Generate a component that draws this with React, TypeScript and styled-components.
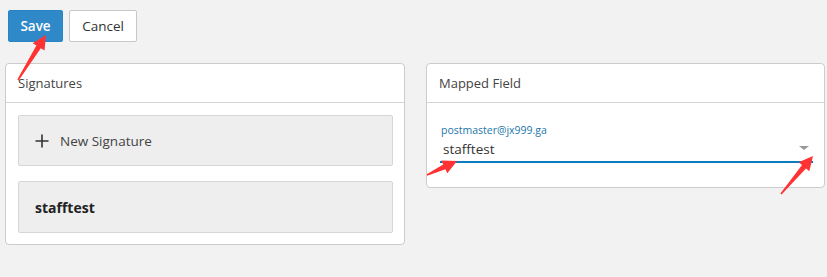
import React from "react";
import styled, { createGlobalStyle } from "styled-components";

const Global = createGlobalStyle`
  html, body { margin: 0; padding: 0; background: #f2f2f2; }
  body { font-family: "Open Sans", "Noto Sans", Arial, sans-serif; color: #333; }
`;

const Page = styled.div`
  position: relative;
  width: 827px;
  height: 277px;
  box-sizing: border-box;
  padding: 10px 3px 0 5px;
`;

const Toolbar = styled.div`
  display: flex;
  gap: 6px;
  padding-left: 3px;
  height: 32px;
`;

const Button = styled.button<{ $primary?: boolean }>`
  box-sizing: border-box;
  height: 32px;
  width: ${(p) => (p.$primary ? 55 : 68)}px;
  padding: 0;
  border-radius: 2px;
  font-family: inherit;
  font-size: 13.5px;
  font-weight: ${(p) => (p.$primary ? 600 : 400)};
  border: 1px solid ${(p) => (p.$primary ? "#2a84c4" : "#c8c8c8")};
  background: ${(p) => (p.$primary ? "#2f88c8" : "#ffffff")};
  color: ${(p) => (p.$primary ? "#ffffff" : "#333")};
`;

const Columns = styled.div`
  display: grid;
  grid-template-columns: 400px 399px;
  column-gap: 21px;
  align-items: start;
  margin-top: 21px;
`;

const Card = styled.section`
  background: #fff;
  border: 1px solid #cccccc;
  border-radius: 4px;
`;

const CardHeader = styled.div`
  height: 38px;
  display: flex;
  align-items: center;
  padding-left: 12px;
  border-bottom: 1px solid #d4d4d4;
  font-size: 13px;
  color: #444;
`;

const List = styled.div`
  display: flex;
  flex-direction: column;
  gap: 15px;
  padding: 12px 11px 11px 12px;
`;

const Tile = styled.div<{ $h: number }>`
  box-sizing: border-box;
  height: ${(p) => p.$h}px;
  display: flex;
  align-items: center;
  gap: 11px;
  padding-left: 16px;
  background: #eeeeee;
  border: 1px solid #d6d6d6;
  border-radius: 2px;
  font-size: 13.5px;
  color: #444;
`;

const Strong = styled.span`
  font-weight: 700;
  color: #222;
  font-size: 14px;
`;

const FieldBody = styled.div`
  padding: 20px 11px 24px 13px;
`;

const FieldLabel = styled.div`
  font-size: 10.5px;
  color: #1c76ab;
  line-height: 14px;
  padding-left: 1px;
`;

const Select = styled.div`
  display: flex;
  align-items: center;
  justify-content: space-between;
  height: 24px;
  border-bottom: 2px solid #0a7cc2;
  padding: 0 4px 0 3px;
  font-size: 13.5px;
  color: #333;
`;

const Caret = styled.span`
  width: 0;
  height: 0;
  border-left: 5px solid transparent;
  border-right: 5px solid transparent;
  border-top: 4px solid #9a9a9a;
  margin-top: -2px;
`;

const Overlay = styled.svg`
  position: absolute;
  left: 0;
  top: 0;
  pointer-events: none;
`;

function Arrow({ x1, y1, x2, y2 }: { x1: number; y1: number; x2: number; y2: number }) {
  const dx = x2 - x1;
  const dy = y2 - y1;
  const len = Math.hypot(dx, dy);
  const ux = dx / len;
  const uy = dy / len;
  const px = -uy;
  const py = ux;
  const head = 14;
  const hw = 7;
  const sw = 2.6;
  const bx = x2 - ux * head;
  const by = y2 - uy * head;
  const pts = [
    [x1 + px * 0.8, y1 + py * 0.8],
    [bx + px * sw, by + py * sw],
    [bx + px * hw, by + py * hw],
    [x2, y2],
    [bx - px * hw, by - py * hw],
    [bx - px * sw, by - py * sw],
    [x1 - px * 0.8, y1 - py * 0.8],
  ]
    .map((p) => p.map((v) => v.toFixed(1)).join(","))
    .join(" ");
  return <polygon points={pts} fill="#ff3333" />;
}

export default function App() {
  return (
    <>
      <Global />
      <Page>
        <Toolbar>
          <Button $primary>Save</Button>
          <Button>Cancel</Button>
        </Toolbar>
        <Columns>
          <Card>
            <CardHeader>Signatures</CardHeader>
            <List>
              <Tile $h={51}>
                <svg width="14" height="14" viewBox="0 0 14 14">
                  <path d="M7 0.5v13M0.5 7h13" stroke="#333" strokeWidth="1.6" />
                </svg>
                New Signature
              </Tile>
              <Tile $h={52}>
                <Strong>stafftest</Strong>
              </Tile>
            </List>
          </Card>
          <Card>
            <CardHeader>Mapped Field</CardHeader>
            <FieldBody>
              <FieldLabel>postmaster@jx999.ga</FieldLabel>
              <Select>
                <span>stafftest</span>
                <Caret />
              </Select>
            </FieldBody>
          </Card>
        </Columns>
        <Overlay width="827" height="277" viewBox="0 0 827 277">
          <Arrow x1={18} y1={80} x2={46} y2={35} />
          <Arrow x1={427} y1={175} x2={457} y2={161} />
          <Arrow x1={781} y1={194} x2={813} y2={156} />
        </Overlay>
      </Page>
    </>
  );
}
